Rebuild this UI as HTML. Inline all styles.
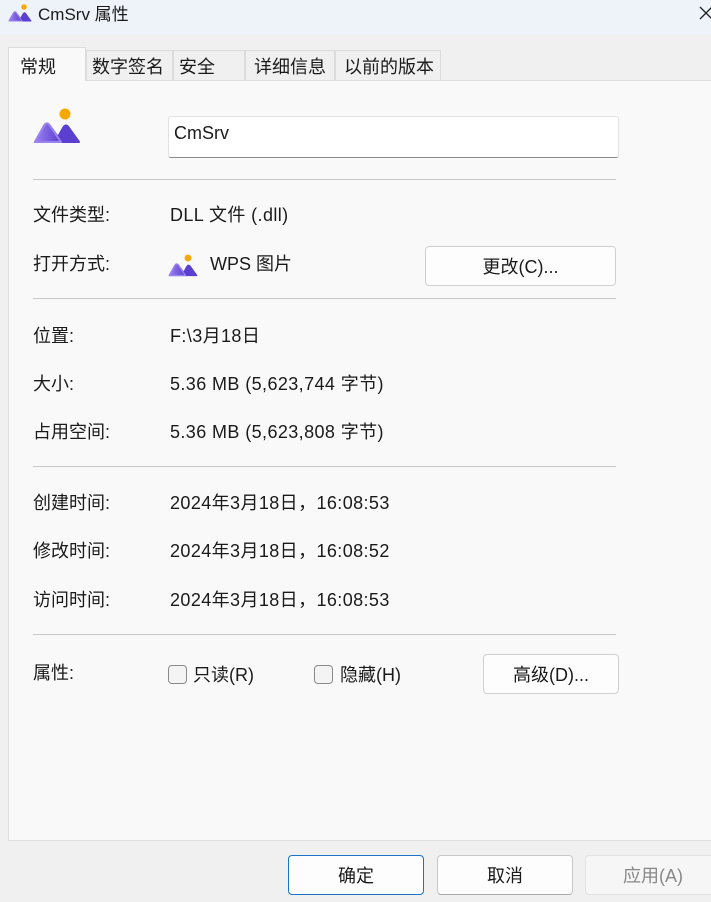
<!DOCTYPE html>
<html><head><meta charset="utf-8"><style>
*{margin:0;padding:0;box-sizing:border-box}
body{width:711px;height:902px;overflow:hidden;background:#f0f0f0;font-family:"Liberation Sans","Noto Sans CJK SC",sans-serif;font-size:18px;color:#1a1a1a;position:relative}
.a{position:absolute;white-space:nowrap;line-height:22px}
.title{left:0;top:0;width:711px;height:35px;background:#eef3f9}
.tab{position:absolute;top:50px;height:30px;border:1px solid #dcdcdc;border-bottom:none;background:#f0f0f0;font-size:18px;line-height:32px;padding-left:5px;white-space:nowrap;overflow:hidden}
.panel{left:8px;top:80px;width:710px;height:761px;background:#f9f9f9;border:1px solid #dedede}
.hr{position:absolute;left:33px;width:583px;height:1px;background:#c8c8c8}
.btn{position:absolute;background:#fdfdfd;border:1px solid #d0d0d0;border-radius:4px;text-align:center;font-size:18px}
.cb{position:absolute;width:19px;height:19px;border:1px solid #8a8a8a;border-radius:4px;background:#f4f4f4}
.n{letter-spacing:0.4px}
</style></head><body>
<svg width="0" height="0" style="position:absolute"><defs>
<linearGradient id="g" x1="0" x2="1"><stop offset="0" stop-color="#9a82f0"/><stop offset="1" stop-color="#5a3ccf"/></linearGradient>
<symbol id="ic" viewBox="0 0 48 40"><circle cx="32" cy="8" r="5.5" fill="#f7a800"/><path d="M2 36 L11 20 Q14 15 17 20 L25 31 L30 22 Q33 17 36 22 L46 36 Z" fill="#5b3fd0" stroke="#5b3fd0" stroke-linejoin="round" stroke-width="2"/><path d="M2 36 L11 20 Q14 15 17 20 L28 36 Z" fill="url(#g)" stroke="#9a82f0" stroke-linejoin="round" stroke-width="2"/></symbol>
</defs></svg>
<div class="a title"></div>
<svg class="a" style="left:8px;top:3px" width="24" height="20"><use href="#ic"/></svg>
<div class="a" style="left:38px;top:4px;font-size:17px">CmSrv 属性</div>
<svg class="a" style="left:699px;top:6px" width="14" height="14"><path d="M1 1L13 13M13 1L1 13" stroke="#222" stroke-width="1.3"/></svg>
<div class="a panel"></div>
<div class="tab" style="left:8px;top:47px;width:78px;height:34px;background:#f9f9f9;line-height:38px;padding-left:11px;z-index:2">常规</div>
<div class="tab" style="left:86px;width:87px">数字签名</div>
<div class="tab" style="left:173px;width:72px">安全</div>
<div class="tab" style="left:245px;width:90px;padding-left:8px">详细信息</div>
<div class="tab" style="left:335px;width:106px;padding-left:8px">以前的版本</div>
<svg class="a" style="left:33px;top:106px" width="48" height="40"><use href="#ic"/></svg>
<div class="a" style="left:168px;top:116px;width:451px;height:42px;background:#fff;border:1px solid #e2e2e2;border-bottom:1px solid #8a8a8a;border-radius:3px;padding:5px 0 0 5px;font-size:18px">CmSrv</div>
<div class="hr" style="top:179px"></div>
<div class="a" style="left:33px;top:204px">文件类型:</div><div class="a n" style="left:170px;top:204px">DLL 文件 (.dll)</div>
<div class="a" style="left:33px;top:253px">打开方式:</div>
<svg class="a" style="left:168px;top:253px" width="30" height="25"><use href="#ic"/></svg>
<div class="a" style="left:210px;top:253px">WPS 图片</div>
<div class="btn" style="left:425px;top:246px;width:191px;height:40px;line-height:40px">更改(C)...</div>
<div class="hr" style="top:298px"></div>
<div class="a" style="left:33px;top:325px">位置:</div><div class="a n" style="left:170px;top:325px">F:\3月18日</div>
<div class="a" style="left:33px;top:373px">大小:</div><div class="a n" style="left:170px;top:373px">5.36 MB (5,623,744 字节)</div>
<div class="a" style="left:33px;top:421px">占用空间:</div><div class="a n" style="left:170px;top:421px">5.36 MB (5,623,808 字节)</div>
<div class="hr" style="top:466px"></div>
<div class="a" style="left:33px;top:492px">创建时间:</div><div class="a n" style="left:170px;top:492px">2024年3月18日，16:08:53</div>
<div class="a" style="left:33px;top:540px">修改时间:</div><div class="a n" style="left:170px;top:540px">2024年3月18日，16:08:52</div>
<div class="a" style="left:33px;top:589px">访问时间:</div><div class="a n" style="left:170px;top:589px">2024年3月18日，16:08:53</div>
<div class="hr" style="top:634px"></div>
<div class="a" style="left:33px;top:662px">属性:</div>
<div class="cb" style="left:168px;top:665px"></div><div class="a" style="left:193px;top:664px">只读(R)</div>
<div class="cb" style="left:314px;top:665px"></div><div class="a" style="left:340px;top:664px">隐藏(H)</div>
<div class="btn" style="left:483px;top:654px;width:136px;height:40px;line-height:40px">高级(D)...</div>
<div class="btn" style="left:288px;top:855px;width:136px;height:40px;line-height:40px;border-color:#1a73c8">确定</div>
<div class="btn" style="left:437px;top:855px;width:136px;height:40px;line-height:40px;border-color:#c8c8c8;border-bottom-color:#aaa">取消</div>
<div class="btn" style="left:585px;top:855px;width:136px;height:40px;line-height:40px;background:#f6f6f6;border-color:#e2e2e2;color:#888">应用(A)</div>
</body></html>
